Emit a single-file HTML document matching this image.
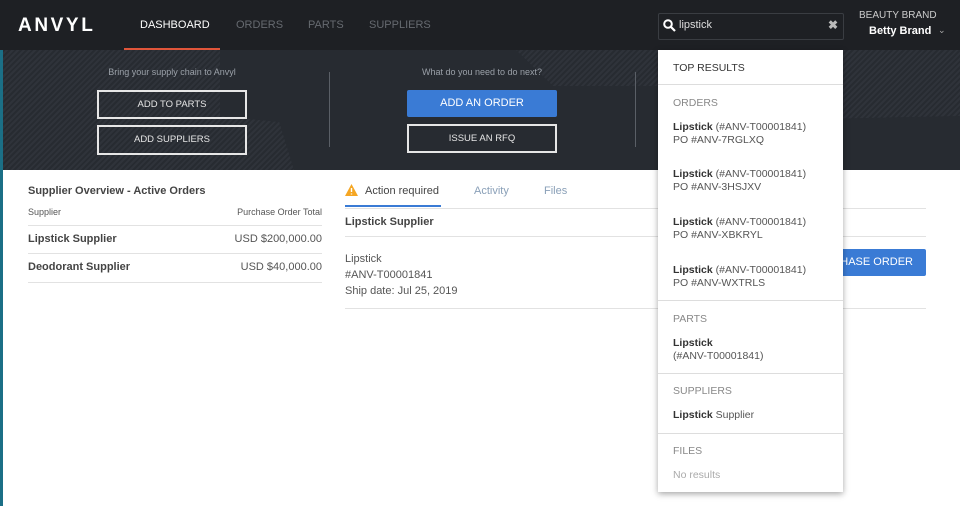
<!DOCTYPE html>
<html><head><style>
*{box-sizing:border-box;margin:0;padding:0}
body{width:960px;height:506px;overflow:hidden;background:#fff;font-family:"Liberation Sans",sans-serif;position:relative;color:#333}
.hdr{position:absolute;left:0;top:0;width:960px;height:50px;background:#1e2024}
.logo{position:absolute;left:18px;top:15px;color:#fff;font-weight:bold;font-size:19px;letter-spacing:2.6px}
.nav{position:absolute;top:19px;font-size:11px;color:#666a70}
.hero{position:absolute;left:0;top:50px;width:960px;height:120px;background:#272b31;
 background-image:repeating-linear-gradient(135deg,#2f333a 0 2px,#272b31 2px 4px)}
.hero .flat{position:absolute;left:220px;top:0;width:740px;height:120px;background:#272b31}
.sub{position:absolute;color:#9aa0a8;font-size:9px;text-align:center}
.ob{position:absolute;border:2px solid #e6e6e6;color:#e6e6e6;font-size:9.5px;text-align:center;background:transparent}
.vl{position:absolute;width:1px;background:#5a5f66}
.strip{position:absolute;left:0;top:50px;width:3px;height:456px;background:#1b6f86}
.t{position:absolute;font-size:11px;white-space:nowrap}
.hl{position:absolute;height:1px;background:#e2e2e2}
.dd{position:absolute;left:658px;top:50px;width:185px;height:442px;background:#fff;box-shadow:0 2px 6px rgba(0,0,0,.35);font-size:10.5px}
.dd .s{position:absolute;left:15px;color:#888}
.dd .i{position:absolute;left:15px;color:#555;line-height:13px}
.dd b{color:#333}
.dd .ln{position:absolute;left:0;width:185px;height:1px;background:#ddd}
</style></head><body>
<div class="hdr">
 <div class="logo">ANVYL</div>
 <div class="nav" style="left:140px;color:#fff">DASHBOARD</div>
 <div style="position:absolute;left:124px;top:48px;width:96px;height:2px;background:#e0553a"></div>
 <div class="nav" style="left:236px">ORDERS</div>
 <div class="nav" style="left:308px">PARTS</div>
 <div class="nav" style="left:369px">SUPPLIERS</div>
 <div style="position:absolute;left:658px;top:13px;width:186px;height:27px;border:1px solid #3a3d42;border-radius:2px;background:#1e2024"></div>
 <svg style="position:absolute;left:663px;top:19px" width="13" height="13" viewBox="0 0 13 13"><circle cx="5" cy="5" r="3.8" stroke="#fff" stroke-width="2" fill="none"/><path d="M8 8l4 4" stroke="#fff" stroke-width="2.2"/></svg>
 <div class="t" style="left:679px;top:19px;color:#ddd">lipstick</div>
 <div class="t" style="left:828px;top:18px;color:#bbb;font-size:12px;font-weight:bold">✖</div>
 <div class="t" style="left:859px;top:10px;color:#ccc;font-size:10px">BEAUTY BRAND</div>
 <div class="t" style="left:869px;top:25px;color:#fff;font-weight:bold">Betty Brand</div>
 <div class="t" style="left:938px;top:25px;color:#aaa;font-size:9px">⌄</div>
</div>
<div class="hero"><div class="flat" style="clip-path:polygon(0 0,40% 0,45% 30%,60% 30%,62% 60%,100% 55%,100% 100%,10% 100%,8% 60%,0 55%)"></div>
 <div class="sub" style="left:97px;top:17px;width:150px">Bring your supply chain to Anvyl</div>
 <div class="ob" style="left:97px;top:40px;width:150px;height:29px;line-height:25px">ADD TO PARTS</div>
 <div class="ob" style="left:97px;top:75px;width:150px;height:30px;line-height:26px">ADD SUPPLIERS</div>
 <div class="vl" style="left:329px;top:22px;height:75px"></div>
 <div class="sub" style="left:407px;top:17px;width:150px">What do you need to do next?</div>
 <div style="position:absolute;left:407px;top:40px;width:150px;height:27px;background:#3a7bd5;border-radius:2px;color:#fff;font-size:11px;text-align:center;line-height:27px">ADD AN ORDER</div>
 <div class="ob" style="left:407px;top:74px;width:150px;height:29px;line-height:25px">ISSUE AN RFQ</div>
 <div class="vl" style="left:635px;top:22px;height:75px"></div>
</div>
<div class="strip"></div>
<div class="t" style="left:28px;top:185px;font-weight:bold;color:#444">Supplier Overview - Active Orders</div>
<div class="t" style="left:28px;top:207px;font-size:9px;color:#555">Supplier</div>
<div class="t" style="right:638px;top:207px;font-size:9px;color:#555">Purchase Order Total</div>
<div class="hl" style="left:28px;top:225px;width:294px"></div>
<div class="t" style="left:28px;top:233px;font-weight:bold;color:#444">Lipstick Supplier</div>
<div class="t" style="right:638px;top:233px;color:#555">USD $200,000.00</div>
<div class="hl" style="left:28px;top:253px;width:294px"></div>
<div class="t" style="left:28px;top:261px;font-weight:bold;color:#444">Deodorant Supplier</div>
<div class="t" style="right:638px;top:261px;color:#555">USD $40,000.00</div>
<div class="hl" style="left:28px;top:282px;width:294px"></div>
<svg style="position:absolute;left:345px;top:184px" width="13" height="12" viewBox="0 0 13 12"><path d="M6.5 0L13 12H0z" fill="#f5a623"/><path d="M6.5 4v4M6.5 9.5v1" stroke="#fff" stroke-width="1.4"/></svg>
<div class="t" style="left:365px;top:185px;color:#444">Action required</div>
<div style="position:absolute;left:345px;top:205px;width:96px;height:2px;background:#3a7bd5"></div>
<div class="t" style="left:474px;top:185px;color:#8aa0b8">Activity</div>
<div class="t" style="left:544px;top:185px;color:#8aa0b8">Files</div>
<div class="hl" style="left:345px;top:208px;width:581px"></div>
<div class="t" style="left:345px;top:216px;font-weight:bold;color:#444">Lipstick Supplier</div>
<div class="hl" style="left:345px;top:236px;width:581px"></div>
<div class="t" style="left:345px;top:251px;color:#555;line-height:16px">Lipstick<br>#ANV-T00001841<br>Ship date: Jul 25, 2019</div>
<div style="position:absolute;left:800px;top:249px;width:126px;height:27px;background:#3a7bd5;border-radius:2px;color:#fff;font-size:11px;line-height:27px;text-align:right;padding-right:13px">PURCHASE ORDER</div>
<div class="hl" style="left:345px;top:308px;width:581px"></div>
<div class="dd">
 <div class="s" style="top:12px;color:#333">TOP RESULTS</div>
 <div class="ln" style="top:34px"></div>
 <div class="s" style="top:47px">ORDERS</div>
 <div class="i" style="top:71px"><b>Lipstick</b> (#ANV-T00001841)<br>PO #ANV-7RGLXQ</div>
 <div class="i" style="top:118px"><b>Lipstick</b> (#ANV-T00001841)<br>PO #ANV-3HSJXV</div>
 <div class="i" style="top:166px"><b>Lipstick</b> (#ANV-T00001841)<br>PO #ANV-XBKRYL</div>
 <div class="i" style="top:214px"><b>Lipstick</b> (#ANV-T00001841)<br>PO #ANV-WXTRLS</div>
 <div class="ln" style="top:250px"></div>
 <div class="s" style="top:263px">PARTS</div>
 <div class="i" style="top:287px"><b>Lipstick</b><br>(#ANV-T00001841)</div>
 <div class="ln" style="top:323px"></div>
 <div class="s" style="top:335px">SUPPLIERS</div>
 <div class="i" style="top:359px"><b>Lipstick</b> Supplier</div>
 <div class="ln" style="top:383px"></div>
 <div class="s" style="top:395px">FILES</div>
 <div class="s" style="top:419px;color:#aaa">No results</div>
</div>
</body></html>
